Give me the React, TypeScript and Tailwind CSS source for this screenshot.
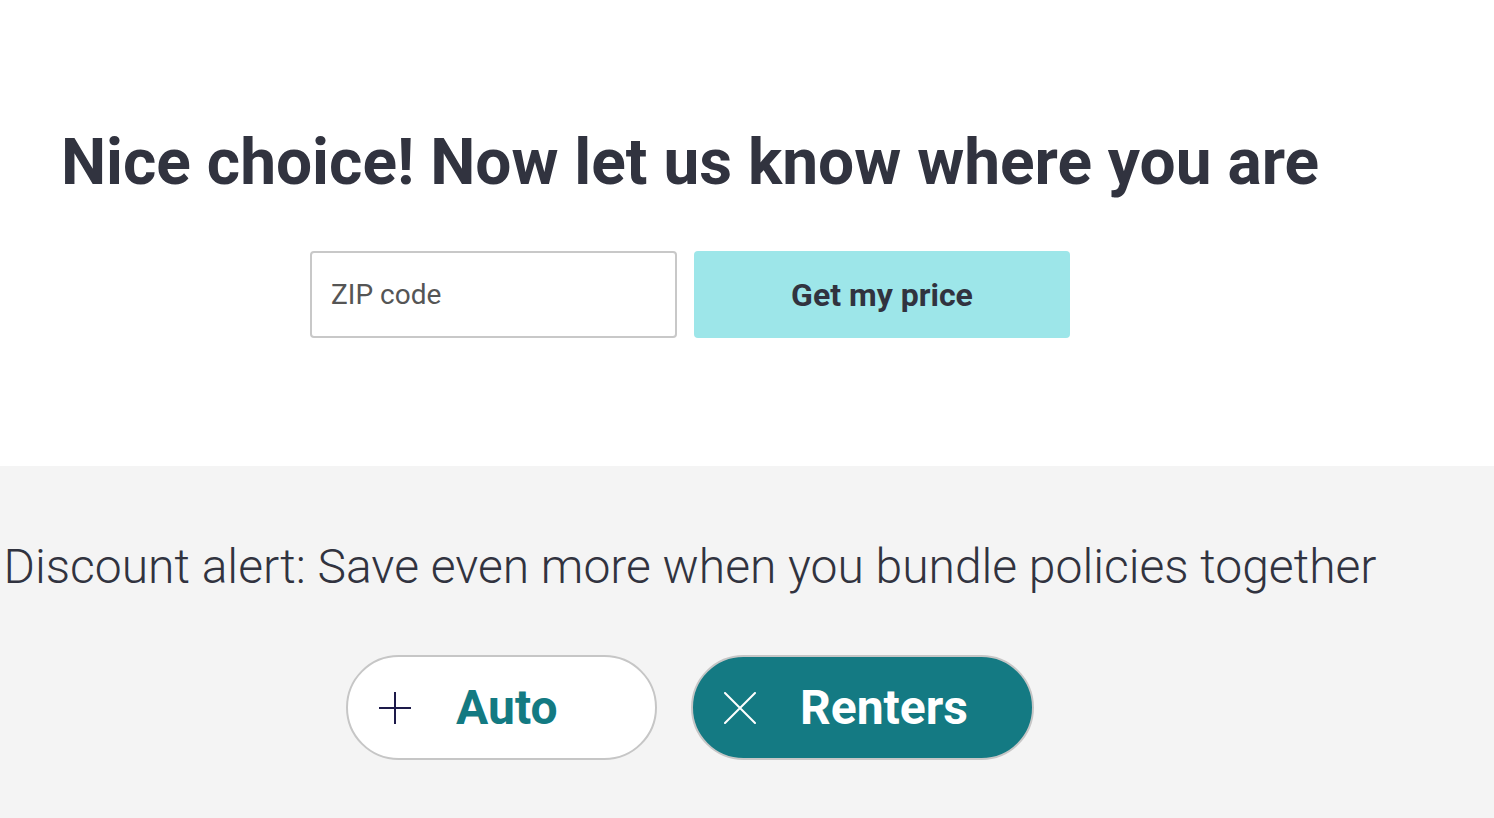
import React from 'react';

function PlusIcon({ className }: { className?: string }) {
  return (
    <svg viewBox="0 0 32 32" className={className} fill="none" stroke="currentColor" strokeWidth={2}>
      <path d="M16 0v32M0 16h32" />
    </svg>
  );
}

function CloseIcon({ className }: { className?: string }) {
  return (
    <svg viewBox="0 0 32 32" className={className} fill="none" stroke="currentColor" strokeWidth={2} strokeLinecap="round">
      <path d="M1 1l30 30M31 1L1 31" />
    </svg>
  );
}

export default function App() {
  return (
    <div className="min-h-screen w-full bg-[#f4f4f4]" style={{ fontFamily: 'Roboto, "Liberation Sans", sans-serif' }}>
      {/* Location section */}
      <section className="h-[466px] w-full bg-white">
        <div className="flex w-[1380px] flex-col items-center pt-[131px]">
          <h1 className="text-[64px] font-bold leading-none text-[#31333f]">
            Nice choice! Now let us know where you are
          </h1>
          <div className="mt-[56px] flex gap-[17px]">
            <input
              type="text"
              placeholder="ZIP code"
              className="h-[87px] w-[367px] rounded-[4px] border-2 border-[#c8c8c8] bg-white px-[19px] text-[28px] text-[#333] placeholder:text-[#555] outline-none"
            />
            <button className="h-[87px] w-[376px] rounded-[4px] bg-[#9de6e9] text-[32px] font-bold text-[#31333f]">
              Get my price
            </button>
          </div>
        </div>
      </section>

      {/* Bundle section */}
      <section className="w-full bg-[#f4f4f4] pb-16">
        <div className="flex w-[1380px] flex-col items-center pt-[77px]">
          <p className="text-[48px] font-light leading-none text-[#31333f]">
            Discount alert: Save even more when you bundle policies together
          </p>
          <div className="mt-[64px] flex gap-[34px]">
            <button className="flex h-[105px] w-[311px] items-center rounded-full border-2 border-[#c6c6c6] bg-white pl-[31px]">
              <PlusIcon className="h-[32px] w-[32px] text-[#1d1a4a]" />
              <span className="ml-[45px] text-[48px] font-bold text-[#137a82]">Auto</span>
            </button>
            <button className="flex h-[105px] w-[343px] items-center rounded-full border-2 border-[#c6c6c6] bg-[#147a83] pl-[31px]">
              <CloseIcon className="h-[32px] w-[32px] text-white" />
              <span className="ml-[44px] text-[48px] font-bold text-white">Renters</span>
            </button>
          </div>
        </div>
      </section>
    </div>
  );
}
